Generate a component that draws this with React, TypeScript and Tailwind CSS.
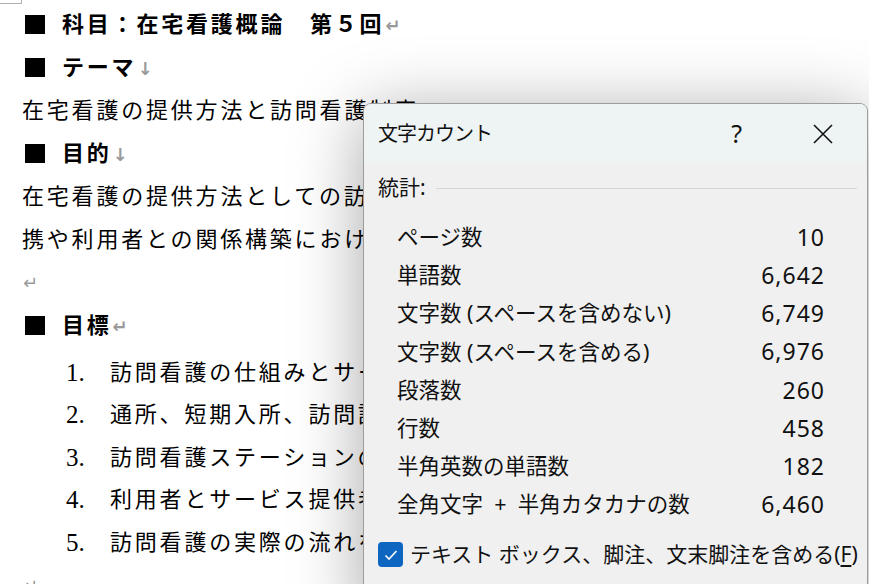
import React from "react";

const docFont = { fontFamily: '"Liberation Serif", "Noto Sans CJK JP", serif' };
const uiFont = { fontFamily: '"Noto Sans", "Noto Sans CJK JP", sans-serif' };

function Mark({ c }: { c: string }) {
  return <span className="text-[#9a9a9a] text-[18px] tracking-normal ml-[1px]" style={{ fontFamily: '"DejaVu Sans", sans-serif' }}>{c}</span>;
}

function Header({ text, mark }: { text: string; mark: string }) {
  return (
    <div className="h-[43px] flex items-center">
      <div className="ml-[25px] w-[20px] h-[19px] bg-black" />
      <div className="ml-[17px] font-bold text-[22px] tracking-[2.8px] whitespace-nowrap">
        {text}
        <Mark c={mark} />
      </div>
    </div>
  );
}

function Para({ text, mark }: { text: string; mark?: string }) {
  return (
    <div className="h-[43px] flex items-center pl-[22px] text-[22px] tracking-[2.8px] whitespace-nowrap">
      {text}
      {mark ? <Mark c={mark} /> : null}
    </div>
  );
}

function Item({ n, text }: { n: number; text: string }) {
  return (
    <div className="h-[42.5px] flex items-center pl-[66px] text-[22px] whitespace-nowrap">
      <span className="w-[44px] text-[25px]">{n}.</span>
      <span className="tracking-[2.8px]">{text}</span>
    </div>
  );
}

const rows: [string, React.ReactNode][] = [
  ["ページ数", "10"],
  ["単語数", "6,642"],
  ["文字数 (スペースを含めない)", "6,749"],
  ["文字数 (スペースを含める)", "6,976"],
  ["段落数", "260"],
  ["行数", "458"],
  ["半角英数の単語数", "182"],
  ["全角文字\u00a0\u00a0+\u00a0\u00a0半角カタカナの数", "6,460"],
];

export default function App() {
  return (
    <div className="relative w-[869px] h-[584px] overflow-hidden bg-white text-black">
      <div className="absolute left-0 top-0 w-[22px] h-[4px] border-b border-r border-[#b0b0b0]" />
      <div className="pt-[3px]" style={docFont}>
        <Header text="科目：在宅看護概論　第５回" mark="↵" />
        <Header text="テーマ" mark="↓" />
        <Para text="在宅看護の提供方法と訪問看護制度" mark="↵" />
        <Header text="目的" mark="↓" />
        <Para text="在宅看護の提供方法としての訪問看護の役割と多職種連" />
        <Para text="携や利用者との関係構築における看護師の役割を学ぶ。" mark="↵" />
        <div className="h-[43px] flex items-center pl-[22px]">
          <Mark c="↵" />
        </div>
        <Header text="目標" mark="↵" />
        <div className="mt-[4px]">
          <Item n={1} text="訪問看護の仕組みとサービス内容を理解する。" />
          <Item n={2} text="通所、短期入所、訪問診療の役割を理解する。" />
          <Item n={3} text="訪問看護ステーションの運営を理解する。" />
          <Item n={4} text="利用者とサービス提供者の関係を理解する。" />
          <Item n={5} text="訪問看護の実際の流れを理解する。" />
        </div>
        <div className="h-[43px] flex items-center pl-[22px]">
          <Mark c="↵" />
        </div>
      </div>

      <div
        className="absolute left-[363px] top-[103px] w-[505px] h-[520px] rounded-t-[8px] border border-[#9c9c9c] bg-[#f0f0f0] shadow-[0_10px_70px_rgba(0,0,0,0.35)] overflow-hidden"
        style={uiFont}
      >
        <div className="h-[59px] bg-[#eef4f4] flex items-center pl-[14px] pr-[33px]">
          <div className="text-[20px] tracking-[-1px] text-[#111]">文字カウント</div>
          <div className="ml-auto text-[25px] leading-none text-[#111] mr-[70px]">?</div>
          <svg width="22" height="22" viewBox="0 0 22 22" className="text-[#111]">
            <path d="M2 2 L20 20 M20 2 L2 20" stroke="currentColor" strokeWidth="1.6" fill="none" />
          </svg>
        </div>
        <div className="pl-[14px]">
          <div className="mt-[10px] h-[30px] flex items-center">
            <span className="text-[21px] text-[#111]">統計:</span>
            <div className="ml-[10px] mr-[10px] flex-1 h-px bg-[#d6d6d6]" />
          </div>
          <div className="mt-[15px] pl-[19px] w-[447px]">
            {rows.map(([k, v], i) => (
              <div key={i} className="h-[38.2px] flex items-center justify-between text-[#111]">
                <span className="text-[21.5px] whitespace-nowrap">{k}</span>
                <span className="text-[23px] tracking-[1px]">{v}</span>
              </div>
            ))}
          </div>
          <div className="mt-[16px] h-[30px] flex items-center">
            <div className="w-[25px] h-[25px] rounded-[4px] bg-[#0e66c0] flex items-center justify-center">
              <svg width="14" height="12" viewBox="0 0 14 12">
                <path d="M1.5 6.5 L5 10 L12.5 2" stroke="white" strokeWidth="1.6" fill="none" />
              </svg>
            </div>
            <span className="ml-[7px] text-[21px] text-[#111] whitespace-nowrap">
              テキスト ボックス、脚注、文末脚注を含める(<span className="underline underline-offset-[3px]">F</span>)
            </span>
          </div>
        </div>
      </div>
    </div>
  );
}
